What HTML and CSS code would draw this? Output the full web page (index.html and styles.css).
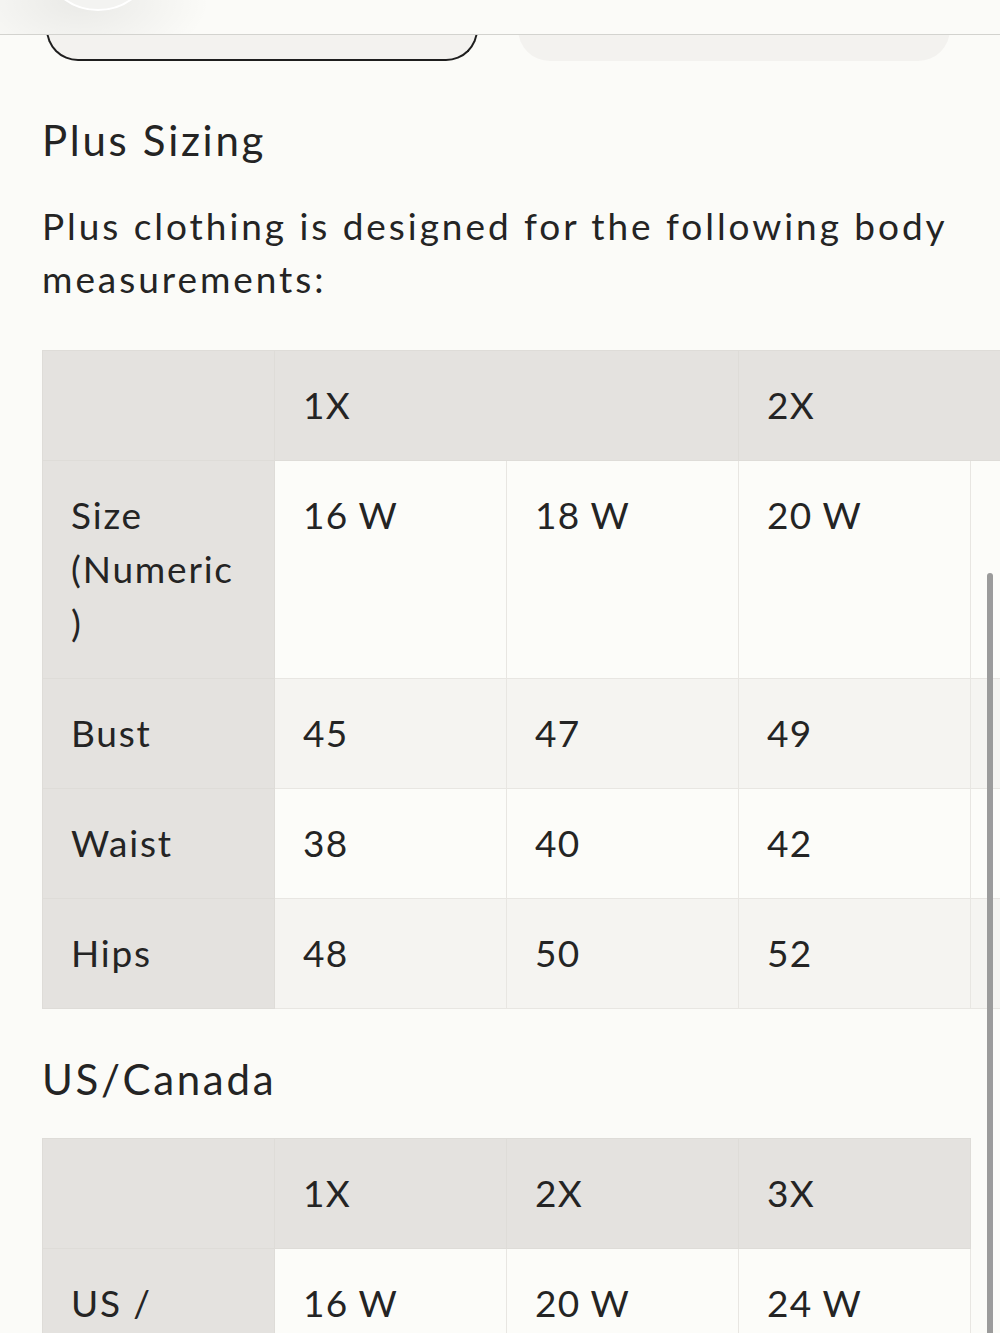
FILE: index.html
```html
<!DOCTYPE html>
<html lang="en">
<head>
<meta charset="utf-8">
<title>Plus Sizing</title>
<link rel="stylesheet" href="styles.css">
</head>
<body>
<div class="topbar">
  <span class="fab"></span>
</div>

<div class="tabs">
  <div class="tab active"></div>
  <div class="tab"></div>
</div>

<main class="content">
  <h2 class="section-title first">Plus Sizing</h2>
  <p class="intro">Plus clothing is designed for the following body measurements:</p>

  <div class="table-scroll">
    <table class="size-table wide">
      <colgroup>
        <col class="c"><col class="c"><col class="c"><col class="c"><col class="c">
      </colgroup>
      <thead>
        <tr><th></th><th colspan="2">1X</th><th colspan="2">2X</th></tr>
      </thead>
      <tbody>
        <tr><th>Size (Numeric<br>)</th><td>16 W</td><td>18 W</td><td>20 W</td><td></td></tr>
        <tr><th>Bust</th><td>45</td><td>47</td><td>49</td><td></td></tr>
        <tr><th>Waist</th><td>38</td><td>40</td><td>42</td><td></td></tr>
        <tr><th>Hips</th><td>48</td><td>50</td><td>52</td><td></td></tr>
      </tbody>
    </table>
  </div>

  <h2 class="section-title">US/Canada</h2>

  <div class="table-scroll">
    <table class="size-table">
      <colgroup>
        <col class="c"><col class="c"><col class="c"><col class="c">
      </colgroup>
      <thead>
        <tr><th></th><th>1X</th><th>2X</th><th>3X</th></tr>
      </thead>
      <tbody>
        <tr><th>US / Canada</th><td>16 W</td><td>20 W</td><td>24 W</td></tr>
      </tbody>
    </table>
  </div>
</main>

<div class="scroll-indicator"></div>
</body>
</html>
```

FILE: styles.css
```css
html, body {
  margin: 0;
  padding: 0;
}

body {
  background: #fbfbf8;
  color: #242424;
  font-family: Lato, "Open Sans", sans-serif;
  height: 1333px;
  overflow: hidden;
  position: relative;
}

.topbar {
  position: absolute;
  top: 0;
  left: 0;
  right: 0;
  height: 34px;
  background:
    radial-gradient(ellipse 130px 70px at 80px 0, rgba(0, 0, 0, 0.07), rgba(0, 0, 0, 0) 100%),
    #fbfbf8;
  border-bottom: 1px solid #d3d3cf;
  overflow: hidden;
  z-index: 2;
}

.fab {
  position: absolute;
  left: 40px;
  top: -105px;
  width: 112px;
  height: 112px;
  border-radius: 50%;
  background: #f3f3f1;
  border: 2px solid #ffffff;
}

.tabs {
  display: grid;
  grid-template-columns: 1fr 1fr;
  gap: 40px;
  padding: 0 50px 0 46px;
}

.tab {
  height: 61px;
  box-sizing: border-box;
  background: #f3f2ef;
  border-radius: 0 0 32px 32px;
}

.tab.active {
  border: 2px solid #1e1e1e;
  border-top: none;
  height: 61px;
}

.content {
  padding: 0 42px;
}

.section-title {
  font-size: 42px;
  font-weight: 400;
  line-height: 50px;
  letter-spacing: 2.7px;
  margin: 0 0 34px;
}

.section-title.first {
  margin-top: 54px;
}

.intro {
  font-size: 37px;
  line-height: 53px;
  letter-spacing: 2.95px;
  margin: 0 0 45px;
}

.table-scroll {
  margin-right: -42px;
  overflow: hidden;
  margin-bottom: 45px;
}

.size-table {
  border-collapse: collapse;
  table-layout: fixed;
  width: 928px;
}

.size-table.wide {
  width: 1160px;
}

.size-table col.c {
  width: 232px;
}

.size-table th,
.size-table td {
  border: 1px solid #e8e6e2;
  padding: 27px 28px 28px;
  font-size: 37px;
  line-height: 54px;
  letter-spacing: 1.2px;
  font-weight: 400;
  text-align: left;
  vertical-align: top;
  color: #242424;
}

.size-table thead th {
  background: #e4e2df;
  border-color: #dedcd8;
}

.size-table tbody th {
  background: #e4e2df;
  border-color: #dedcd8;
  letter-spacing: 1.8px;
}

.size-table tbody tr:nth-child(odd) td {
  background: #fcfcf9;
}

.size-table tbody tr:nth-child(even) td {
  background: #f5f4f1;
}

.scroll-indicator {
  position: absolute;
  right: 7px;
  top: 573px;
  width: 6px;
  height: 800px;
  border-radius: 3px;
  background: #9b9b9b;
  z-index: 3;
}
```
